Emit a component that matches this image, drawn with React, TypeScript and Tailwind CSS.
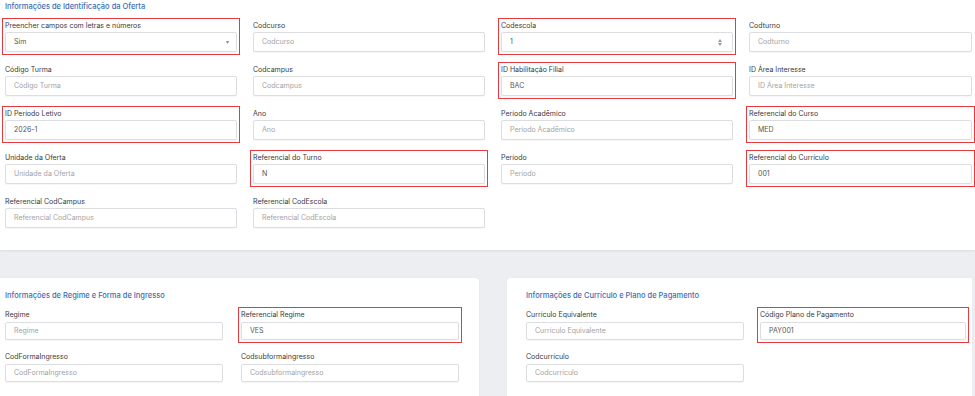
type Field = {
  label: string
  placeholder?: string
  value?: string
  flagged?: boolean
  kind?: 'select' | 'number'
}

const topFields: Field[] = [
  { label: 'Preencher campos com letras e números', value: 'Sim', flagged: true, kind: 'select' },
  { label: 'Codcurso', placeholder: 'Codcurso' },
  { label: 'Codescola', value: '1', flagged: true, kind: 'number' },
  { label: 'Codturno', placeholder: 'Codturno' },
  { label: 'Código Turma', placeholder: 'Código Turma' },
  { label: 'Codcampus', placeholder: 'Codcampus' },
  { label: 'ID Habilitação Filial', value: 'BAC', flagged: true },
  { label: 'ID Área Interesse', placeholder: 'ID Área Interesse' },
  { label: 'ID Período Letivo', value: '2026-1', flagged: true },
  { label: 'Ano', placeholder: 'Ano' },
  { label: 'Período Acadêmico', placeholder: 'Período Acadêmico' },
  { label: 'Referencial do Curso', value: 'MED', flagged: true },
  { label: 'Unidade da Oferta', placeholder: 'Unidade da Oferta' },
  { label: 'Referencial do Turno', value: 'N', flagged: true },
  { label: 'Período', placeholder: 'Período' },
  { label: 'Referencial do Currículo', value: '001', flagged: true },
  { label: 'Referencial CodCampus', placeholder: 'Referencial CodCampus' },
  { label: 'Referencial CodEscola', placeholder: 'Referencial CodEscola' },
]

const regimeFields: Field[] = [
  { label: 'Regime', placeholder: 'Regime' },
  { label: 'Referencial Regime', value: 'VES', flagged: true },
  { label: 'CodFormaIngresso', placeholder: 'CodFormaIngresso' },
  { label: 'Codsubformaingresso', placeholder: 'Codsubformaingresso' },
]

const curriculoFields: Field[] = [
  { label: 'Currículo Equivalente', placeholder: 'Currículo Equivalente' },
  { label: 'Código Plano de Pagamento', value: 'PAY001', flagged: true },
  { label: 'Codcurrículo', placeholder: 'Codcurrículo' },
]

function FormField({ field, size }: { field: Field; size: 'lg' | 'sm' }) {
  return (
    <div
      className={
        field.flagged
          ? 'flex flex-col gap-[1px] outline outline-1 outline-[#e53a3f] outline-offset-[2px]'
          : 'flex flex-col gap-[1px]'
      }
    >
      <span className="h-[10px] text-[7px] leading-[10px] text-[#3a3a3a] whitespace-nowrap">{field.label}</span>
      <div
        className={`flex items-center justify-between rounded-[2px] border border-[#dcdde0] bg-white pl-[8px] pr-[7px] shadow-[0_1px_1px_rgba(0,0,0,0.04)] ${
          size === 'lg' ? 'h-[20px]' : 'mt-[1px] h-[18px]'
        }`}
      >
        {field.value ? (
          <span className="text-[7px] text-[#555]">{field.value}</span>
        ) : (
          <span className="text-[7px] text-[#a3a3a3]">{field.placeholder}</span>
        )}
        {field.kind === 'select' && <span className="text-[6px] leading-none text-[#888]">▾</span>}
        {field.kind === 'number' && (
          <span className="mr-[3px] flex flex-col items-center gap-[1px]">
            <span className="h-0 w-0 border-x-[2px] border-b-[3px] border-x-transparent border-b-[#999]" />
            <span className="h-0 w-0 border-x-[2px] border-t-[3px] border-x-transparent border-t-[#999]" />
          </span>
        )}
      </div>
    </div>
  )
}

export default function App() {
  return (
    <div className="h-[396px] w-[975px] overflow-hidden bg-[#eceef1] font-['Inter',sans-serif]">
      <section className="bg-white pl-[5px] pt-[2px] pb-[22px] shadow-[0_1px_2px_rgba(0,0,0,0.08)]">
        <h2 className="h-[10px] text-[7.5px] font-medium leading-[10px] text-[#3d6db4]">
          Informações de Identificação da Oferta
        </h2>
        <div className="mt-[9px] grid grid-cols-[232px_232px_232px_223px] gap-x-[16px] gap-y-[13px]">
          {topFields.map((f) => (
            <FormField key={f.label} field={f} size="lg" />
          ))}
        </div>
      </section>

      <div className="mt-[28px] flex gap-[28px] pr-[3px]">
        <section className="h-[140px] w-[479px] shrink-0 rounded-tr-[4px] bg-white pl-[5px] pt-[13px] shadow-[0_0_2px_rgba(0,0,0,0.05)]">
          <h2 className="h-[10px] text-[7.5px] font-medium leading-[10px] text-[#3d6db4]">
            Informações de Regime e Forma de Ingresso
          </h2>
          <div className="mt-[9px] grid grid-cols-[218px_218px] gap-x-[18px] gap-y-[12px]">
            {regimeFields.map((f) => (
              <FormField key={f.label} field={f} size="sm" />
            ))}
          </div>
        </section>

        <section className="h-[140px] flex-1 overflow-hidden rounded-tl-[4px] bg-white pl-[19px] pt-[13px] shadow-[0_0_2px_rgba(0,0,0,0.05)]">
          <h2 className="h-[10px] text-[7.5px] font-medium leading-[10px] text-[#3d6db4]">
            Informações de Currículo e Plano de Pagamento
          </h2>
          <div className="mt-[9px] grid grid-cols-[218px_206px] gap-x-[16px] gap-y-[12px]">
            {curriculoFields.map((f) => (
              <FormField key={f.label} field={f} size="sm" />
            ))}
          </div>
        </section>
      </div>
    </div>
  )
}
